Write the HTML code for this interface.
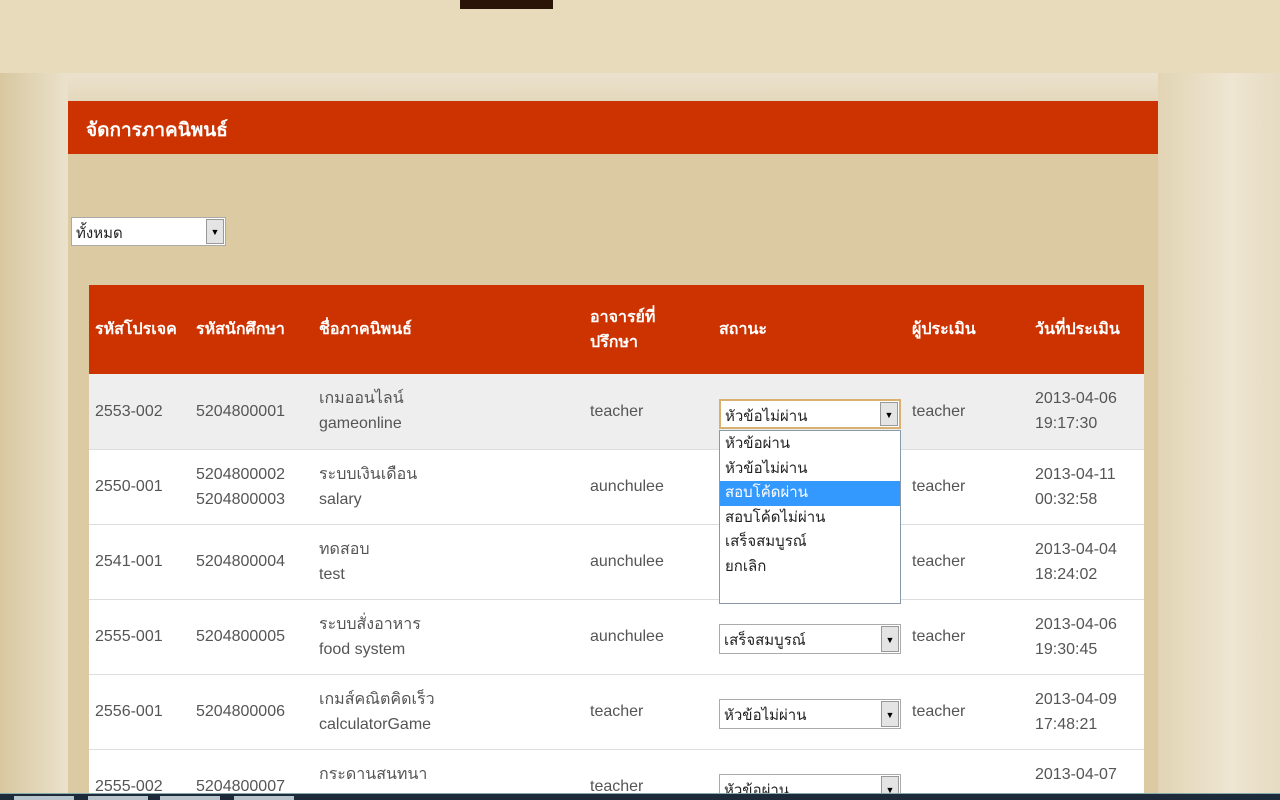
<!DOCTYPE html>
<html style="width:1280px;height:800px;overflow:hidden"><head><meta charset="utf-8"><style>
*{margin:0;padding:0;box-sizing:border-box}
body{width:1280px;height:800px;overflow:hidden;position:relative;background:#e0d0aa;font-family:"Liberation Sans","Noto Sans CJK SC",sans-serif;color:#333}
.top{position:absolute;left:0;top:0;width:1280px;height:73px;background:#e8dbbb}
.logo{position:absolute;left:460px;top:0;width:93px;height:9px;background:#2a1408}
.leftg{position:absolute;left:0;top:73px;width:68px;height:727px;background:linear-gradient(90deg,#d8c7a0,#ebe2cc)}
.rightg{position:absolute;left:1158px;top:73px;width:122px;height:727px;background:linear-gradient(90deg,#e2d4b4,#eee6d2 60%,#e6dbc2)}
.band{position:absolute;left:68px;top:73px;width:1090px;height:28px;background:linear-gradient(180deg,#ebe2ce,#e4d8bc)}
.content{position:absolute;left:68px;top:101px;width:1090px;height:699px;background:#dccaa2}
.hdr{position:absolute;left:68px;top:101px;width:1090px;height:53px;background:#cc3300;color:#fff;font-size:19px;font-weight:bold;padding:14px 0 0 18px}
.sel{position:absolute;background:#fff;border:1px solid #aaa;font-size:15px;color:#222;padding:3px 0 0 4px}
.arr{position:absolute;right:1px;top:1px;width:18px;background:#e4e4e4;border:1px solid #999;font-size:9px;text-align:center;color:#000}
.wrap{position:absolute;left:0;top:0;width:1280px;height:793px;overflow:hidden}
table{position:absolute;left:89px;top:285px;width:1055px;border-collapse:collapse}
th{background:#cc3300;color:#fff;font-size:16px;text-align:left;height:89px;font-weight:bold;padding-left:6px}
td{height:75px;font-size:16px;color:#555;border-bottom:1px solid #ddd;padding-left:6px;line-height:25px;background:#fff}
tr.a td{background:#eeeeee}
.task{position:absolute;left:0;top:793px;width:1280px;height:7px;background:#1c2a3a;border-top:1px solid #8aa}
.task i{position:absolute;top:2px;height:5px;width:60px;background:#b8c4cc}
.dd{position:absolute;left:719px;top:430px;width:182px;height:174px;background:#fff;border:1px solid #8899aa;font-size:15px;color:#222;line-height:24.5px;padding-top:1px}
.dd div{padding-left:5px}
.dd .h{background:#3399ff;color:#fff}
</style></head><body>
<div class="top"></div><div class="logo"></div>
<div class="leftg"></div><div class="rightg"></div><div class="band"></div>
<div class="content"></div>
<div class="hdr">จัดการภาคนิพนธ์</div>
<div class="sel" style="left:71px;top:217px;width:155px;height:29px">ทั้งหมด<div class="arr" style="height:25px;line-height:25px">▼</div></div>
<div class="wrap">
<table>
<tr><th style="width:101px">รหัสโปรเจค</th><th style="width:123px">รหัสนักศึกษา</th><th style="width:271px">ชื่อภาคนิพนธ์</th><th style="width:129px">อาจารย์ที่<br>ปรึกษา</th><th style="width:193px">สถานะ</th><th style="width:123px">ผู้ประเมิน</th><th>วันที่ประเมิน</th></tr>
<tr class="a"><td>2553-002</td><td>5204800001</td><td>เกมออนไลน์<br>gameonline</td><td>teacher</td><td></td><td>teacher</td><td>2013-04-06<br>19:17:30</td></tr>
<tr><td>2550-001</td><td>5204800002<br>5204800003</td><td>ระบบเงินเดือน<br>salary</td><td>aunchulee</td><td></td><td>teacher</td><td>2013-04-11<br>00:32:58</td></tr>
<tr><td>2541-001</td><td>5204800004</td><td>ทดสอบ<br>test</td><td>aunchulee</td><td></td><td>teacher</td><td>2013-04-04<br>18:24:02</td></tr>
<tr><td>2555-001</td><td>5204800005</td><td>ระบบสั่งอาหาร<br>food system</td><td>aunchulee</td><td></td><td>teacher</td><td>2013-04-06<br>19:30:45</td></tr>
<tr><td>2556-001</td><td>5204800006</td><td>เกมส์คณิตคิดเร็ว<br>calculatorGame</td><td>teacher</td><td></td><td>teacher</td><td>2013-04-09<br>17:48:21</td></tr>
<tr><td>2555-002</td><td>5204800007</td><td>กระดานสนทนา<br>&nbsp;</td><td>teacher</td><td></td><td></td><td>2013-04-07<br>&nbsp;</td></tr>
</table>
<div class="sel" style="left:719px;top:774px;width:182px;height:30px">หัวข้อผ่าน<div class="arr" style="height:26px;line-height:26px">▼</div></div>
</div>
<div class="sel" style="left:719px;top:399px;width:182px;height:30px;border:2px solid #d8b070">หัวข้อไม่ผ่าน<div class="arr" style="height:24px;line-height:24px">▼</div></div>
<div class="dd"><div>หัวข้อผ่าน</div><div>หัวข้อไม่ผ่าน</div><div class="h">สอบโค้ดผ่าน</div><div>สอบโค้ดไม่ผ่าน</div><div>เสร็จสมบูรณ์</div><div>ยกเลิก</div></div>
<div class="sel" style="left:719px;top:624px;width:182px;height:30px">เสร็จสมบูรณ์<div class="arr" style="height:26px;line-height:26px">▼</div></div>
<div class="sel" style="left:719px;top:699px;width:182px;height:30px">หัวข้อไม่ผ่าน<div class="arr" style="height:26px;line-height:26px">▼</div></div>
<div class="task"><i style="left:14px"></i><i style="left:88px"></i><i style="left:160px"></i><i style="left:234px"></i></div>
</body></html>
